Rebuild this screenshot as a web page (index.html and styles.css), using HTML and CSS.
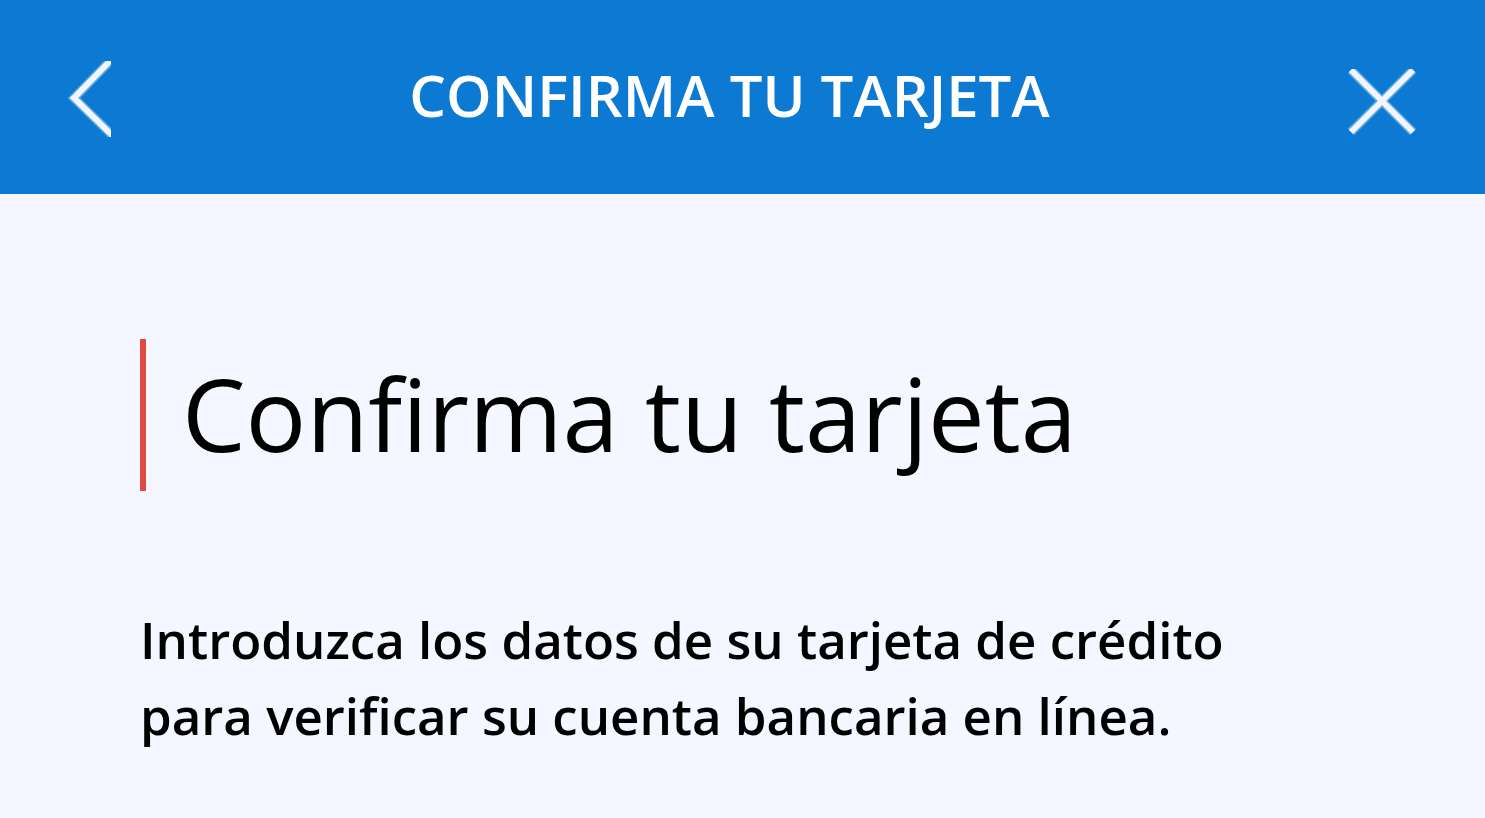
FILE: index.html
```html
<!DOCTYPE html>
<html lang="es">
<head>
<meta charset="utf-8">
<meta name="viewport" content="width=device-width, initial-scale=1">
<title>Confirma tu tarjeta</title>
<link rel="stylesheet" href="styles.css">
</head>
<body>
<header class="topbar">
  <button class="icon-button" type="button" aria-label="Volver">
    <svg class="icon icon-back" viewBox="0 0 44 82" aria-hidden="true">
      <svg y="5" width="43" height="76" viewBox="0 5 43 76">
        <path class="icon-edge" d="M46 1 6 42 46 81"/>
        <path class="icon-line" d="M46 1 6 42 46 81"/>
      </svg>
    </svg>
  </button>
  <p class="topbar-title">CONFIRMA TU TARJETA</p>
  <button class="icon-button" type="button" aria-label="Cerrar">
    <svg class="icon icon-close" viewBox="0 0 70 82" aria-hidden="true">
      <svg y="13" width="69" height="66" viewBox="0 13 69 66">
        <path class="icon-edge" d="M4 14 66 76M66 14 4 76"/>
        <path class="icon-line" d="M4 14 66 76M66 14 4 76"/>
      </svg>
    </svg>
  </button>
</header>
<main class="content">
  <h1 class="heading">Confirma tu tarjeta</h1>
  <p class="intro">Introduzca los datos de su tarjeta de crédito para verificar su cuenta bancaria en línea.</p>
</main>
</body>
</html>
```
FILE: styles.css
```css
* {
  box-sizing: border-box;
}

body {
  margin: 0;
  background: #f4f7ff;
  color: #000;
  font-family: "Open Sans", "Noto Sans", sans-serif;
}

.topbar {
  display: flex;
  align-items: flex-start;
  justify-content: space-between;
  padding: 56px 68px;
  background: #0c79d2;
  color: #fff;
}

.topbar-title {
  margin: 0;
  font-size: 58px;
  font-weight: 600;
  line-height: 78px;
}

.icon-button {
  display: flex;
  padding: 0;
  border: 0;
  background: none;
  color: inherit;
  cursor: pointer;
}

.icon {
  height: 82px;
  fill: none;
}

.icon-back {
  width: 44px;
}

.icon-close {
  width: 70px;
}

.icon-edge {
  stroke: #8fcdf2;
  stroke-opacity: 0.6;
  stroke-width: 9;
}

.icon-line {
  stroke: #f3f5fb;
  stroke-width: 6;
}

.content {
  padding: 145px 140px 64px;
}

.heading {
  margin: 0 0 110px;
  padding: 0 36px 4px;
  border-left: 6px solid #de4b42;
  font-size: 101px;
  font-weight: 400;
  line-height: 148px;
}

.intro {
  margin: 0;
  font-size: 51px;
  font-weight: 600;
  line-height: 76px;
}
```
